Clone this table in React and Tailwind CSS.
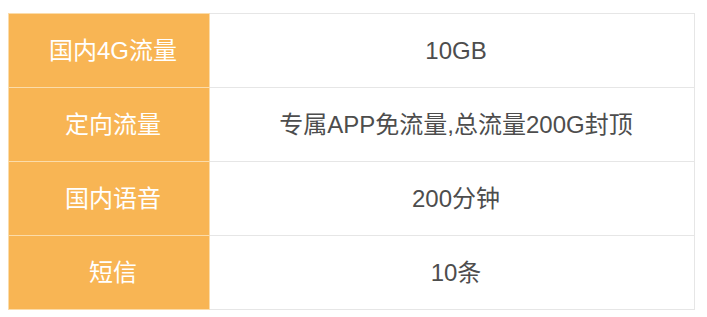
import React from 'react';

const rows = [
  { label: '国内4G流量', value: '10GB' },
  { label: '定向流量', value: '专属APP免流量,总流量200G封顶' },
  { label: '国内语音', value: '200分钟' },
  { label: '短信', value: '10条' },
];

export default function App() {
  return (
    <div
      className="min-h-[317px] bg-white pl-[8px] pt-[13px]"
      style={{ fontFamily: '"Liberation Sans", "Noto Sans CJK SC", sans-serif' }}
    >
      <table className="w-[687px] border-collapse text-[24px]">
        <tbody>
          {rows.map((row) => (
            <tr key={row.label} className="h-[74px]">
              <td className="w-[201px] border border-[#fbdcaa] bg-[#f8b554] py-0 pl-[8px] pr-0 text-center text-white">
                {row.label}
              </td>
              <td className="border border-[#e6e6e6] py-0 pl-[8px] pr-0 text-center text-[#4d4d4d]">
                {row.value}
              </td>
            </tr>
          ))}
        </tbody>
      </table>
    </div>
  );
}
